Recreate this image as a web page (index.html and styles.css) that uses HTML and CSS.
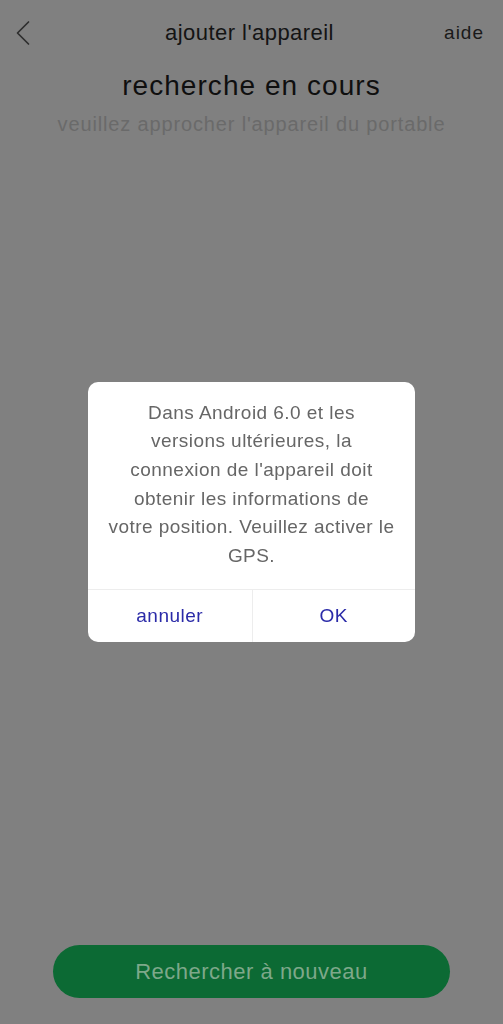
FILE: index.html
```html
<!DOCTYPE html>
<html lang="fr">
<head>
<meta charset="utf-8">
<link rel="stylesheet" href="styles.css">
</head>
<body>
<div class="screen">
  <header class="topbar">
    <span class="back">
      <svg width="16" height="26" viewBox="0 0 16 26"><path d="M13.5 2 L2.5 13 L13.5 24" fill="none" stroke="#2e2e2e" stroke-width="1.7" stroke-linecap="round" stroke-linejoin="round"/></svg>
    </span>
    <span class="title">ajouter l'appareil</span>
    <span class="help">aide</span>
  </header>
  <h1 class="heading">recherche en cours</h1>
  <p class="sub">veuillez approcher l'appareil du portable</p>
  <div class="spacer"></div>
  <div class="footer">
    <button class="retry">Rechercher à nouveau</button>
  </div>
</div>
<div class="overlay">
  <div class="dialog">
    <p class="msg">Dans Android 6.0 et les<br>versions ultérieures, la<br>connexion de l'appareil doit<br>obtenir les informations de<br>votre position. Veuillez activer le<br>GPS.</p>
    <div class="actions">
      <span class="act">annuler</span>
      <span class="act">OK</span>
    </div>
  </div>
</div>
</body>
</html>
```
FILE: styles.css
```css
html, body {
  margin: 0;
  padding: 0;
}
body {
  background: #808080;
  font-family: "Liberation Sans", Arial, sans-serif;
  width: 503px;
  height: 1024px;
  overflow: hidden;
}
.screen {
  height: 1024px;
  display: flex;
  flex-direction: column;
}
.topbar {
  display: grid;
  grid-template-columns: 1fr auto 1fr;
  align-items: center;
  height: 66px;
  padding: 0 19px 0 15px;
}
.back {
  display: flex;
  align-items: center;
}
.title {
  font-size: 22px;
  letter-spacing: 0.45px;
  color: #141414;
}
.help {
  justify-self: end;
  font-size: 19px;
  letter-spacing: 1px;
  color: #1a1a1a;
}
.heading {
  margin: 4px 0 0;
  text-align: center;
  font-weight: normal;
  font-size: 28px;
  letter-spacing: 1.05px;
  line-height: 32px;
  color: #0f0f0f;
}
.sub {
  margin: 10px 0 0;
  text-align: center;
  font-size: 20px;
  letter-spacing: 0.85px;
  line-height: 24px;
  color: #6a6a6a;
}
.spacer {
  flex: 1;
}
.footer {
  padding: 0 53px 26px;
}
.retry {
  display: block;
  width: 100%;
  height: 53px;
  border: none;
  border-radius: 27px;
  background: #0c6a34;
  color: #7ea88a;
  font-family: inherit;
  font-size: 22px;
  letter-spacing: 0.5px;
}
.overlay {
  position: fixed;
  inset: 0;
  display: flex;
  align-items: center;
  justify-content: center;
}
.dialog {
  width: 327px;
  background: #ffffff;
  border-radius: 10px;
  overflow: hidden;
}
.msg {
  margin: 0;
  padding: 17px 8px 19px;
  text-align: center;
  font-size: 19px;
  letter-spacing: 0.45px;
  line-height: 28.6px;
  color: #666666;
}
.actions {
  display: grid;
  grid-template-columns: 1fr 1fr;
  border-top: 1px solid #ededed;
  height: 52px;
}
.act {
  display: flex;
  align-items: center;
  justify-content: center;
  font-size: 19px;
  letter-spacing: 0.5px;
  color: #2a2aa8;
}
.act + .act {
  border-left: 1px solid #ededed;
}
```
